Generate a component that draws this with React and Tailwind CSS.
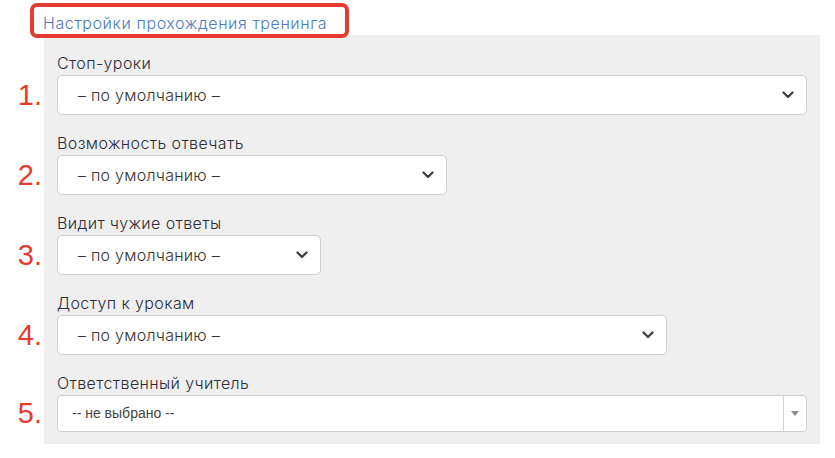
import React from "react";

const rows = [
  { num: "1.", label: "Стоп-уроки", width: "w-[750px]" },
  { num: "2.", label: "Возможность отвечать", width: "w-[390px]" },
  { num: "3.", label: "Видит чужие ответы", width: "w-[264px]" },
  { num: "4.", label: "Доступ к урокам", width: "w-[610px]" },
];

function Chevron() {
  return (
    <svg width="12" height="8" viewBox="0 0 12 8" className="text-[#444]">
      <path d="M1.5 1.5 L6 6 L10.5 1.5" fill="none" stroke="currentColor" strokeWidth="2.4" strokeLinecap="round" strokeLinejoin="round" />
    </svg>
  );
}

function SelectBox({ width }) {
  return (
    <div className={`${width} h-[40px] bg-white border border-[#cfcfcf] rounded-[5px] flex items-center justify-between pl-[20px] pr-[12px]`}>
      <span className="text-[16px] font-light tracking-[0.25px] text-[#333]">– по умолчанию –</span>
      <Chevron />
    </div>
  );
}

export default function App() {
  return (
    <div className="w-[835px] h-[458px] bg-white pt-[3px]" style={{ fontFamily: "Inter, 'Noto Sans', sans-serif" }}>
      {/* Title */}
      <div className="ml-[30px] inline-flex items-center h-[35px] border-4 border-[#e53b2f] rounded-[7px] pl-[9px] pr-[18px] pt-[5px] relative z-10">
        <span className="text-[16px] font-light tracking-[0.6px] text-[#4a7cc0] leading-none">Настройки прохождения тренинга</span>
      </div>

      {/* Settings panel */}
      <div className="-mt-[3px] flex flex-col">
        {rows.map((r, i) => (
          <div key={r.num} className="flex">
            <div className={`w-[44px] flex flex-col justify-end ${i === 0 ? "pt-[16px]" : ""} pb-[16px]`}>
              <div className="h-[40px] flex items-center justify-end pr-[2px] text-[29px] leading-none text-[#e53b2f]" style={{ fontFamily: "'Liberation Sans', Arial, sans-serif" }}>
                {r.num}
              </div>
            </div>
            <div className={`w-[776px] bg-[#efefef] pl-[13px] ${i === 0 ? "pt-[16px]" : ""} pb-[16px]`}>
              <div className="h-[24px] text-[16px] font-light tracking-[0.4px] leading-[24px] text-[#2c2c38]">{r.label}</div>
              <SelectBox width={r.width} />
            </div>
          </div>
        ))}

        <div className="flex">
          <div className="w-[44px] flex flex-col justify-end pb-[12px]">
            <div className="h-[37px] flex items-center justify-end pr-[2px] text-[29px] leading-none text-[#e53b2f]" style={{ fontFamily: "'Liberation Sans', Arial, sans-serif" }}>
              5.
            </div>
          </div>
          <div className="w-[776px] bg-[#efefef] pl-[13px] pb-[12px]">
            <div className="h-[24px] text-[16px] font-light tracking-[0.4px] leading-[24px] text-[#2c2c38]">Ответственный учитель</div>
            <div className="w-[750px] h-[37px] bg-white border border-[#cfcfcf] rounded-[4px] flex items-stretch">
              <div className="flex-1 flex items-center pl-[14px] text-[14px] text-[#444]" style={{ fontFamily: "'Liberation Sans', Arial, sans-serif" }}>
                -- не выбрано --
              </div>
              <div className="w-[23px] border-l border-[#d6d6d6] flex items-center justify-center">
                <svg width="8" height="5" viewBox="0 0 8 5">
                  <path d="M0 0 L8 0 L4 5 Z" fill="#888" />
                </svg>
              </div>
            </div>
          </div>
        </div>
      </div>
    </div>
  );
}
